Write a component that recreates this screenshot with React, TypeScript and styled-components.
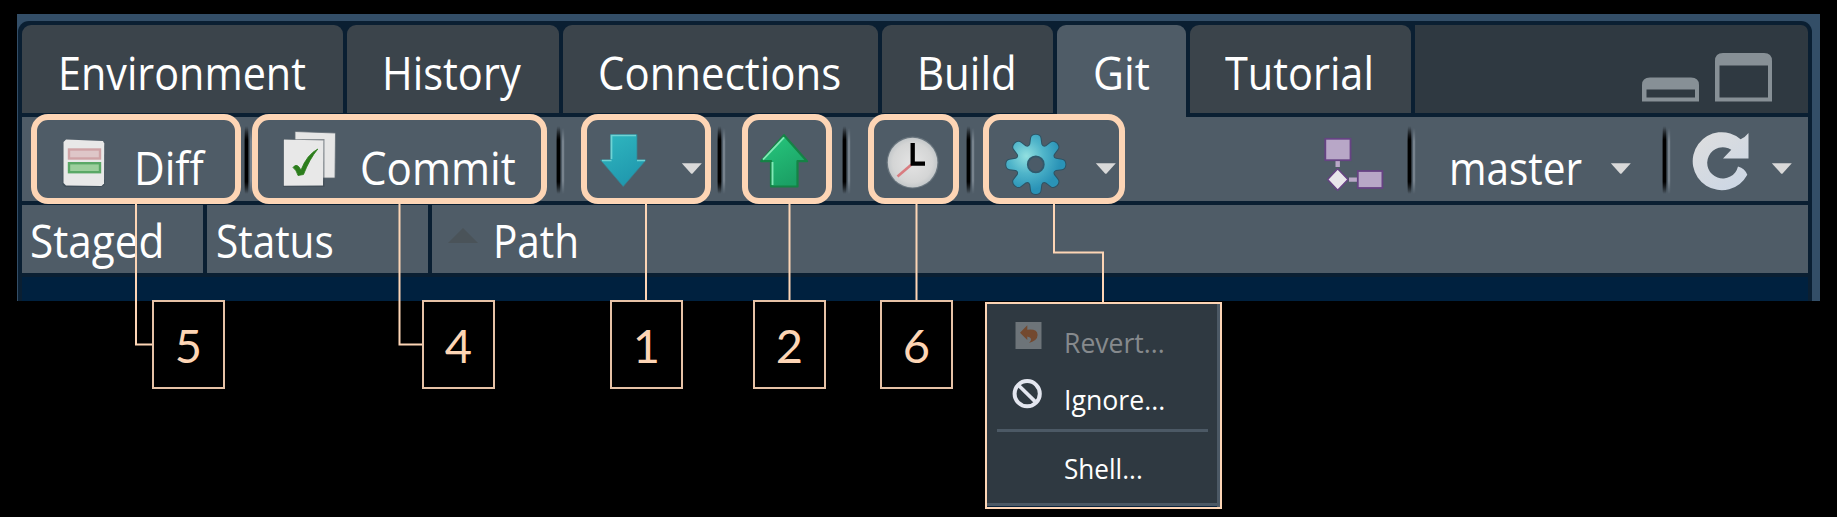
import React from "react";
import styled, { createGlobalStyle } from "styled-components";

const peach = "#fdd5b5";
const line = "#0a1f32";
const slate = "#4f5c67";

const GlobalStyle = createGlobalStyle`
  * { box-sizing: border-box; }
  html, body { margin: 0; padding: 0; background: #000; overflow: hidden; }
`;

const Stage = styled.main`
  position: relative;
  width: 1837px;
  height: 517px;
  padding: 14px 17px 0;
  background: #000;
  overflow: hidden;
  font-family: "Open Sans", "Noto Sans", sans-serif;
  color: #fff;
`;

const Frame = styled.section`
  width: 1803px;
  height: 287px;
  padding: 7px 8.5px 0 1px;
  background: #334e67;
  overflow: hidden;
`;

const Pane = styled.div`
  height: 280px;
  padding: 3.5px 3.5px 0 4px;
  background: ${line};
  border-radius: 11px 11px 0 0;
`;

const TabStrip = styled.nav`
  display: flex;
  gap: 4px;
  height: 88.5px;
  margin-bottom: 4px;
`;

const Tab = styled.div<{ $w: number; $active?: boolean }>`
  flex: none;
  width: ${(p) => p.$w}px;
  height: ${(p) => (p.$active ? 93 : 88.5)}px;
  padding-left: 35.5px;
  line-height: 95px;
  background: ${(p) => (p.$active ? slate : "#3b444b")};
  border-radius: 9px 9px 0 0;
`;

const StripEnd = styled.div`
  flex: 1;
  display: flex;
  justify-content: flex-end;
  align-items: flex-start;
  padding: 28px 36px 0 0;
  gap: 16px;
  background: #2f3941;
  border-radius: 0 7px 0 0;
`;

const Label = styled.span<{ $k: number; $w?: number; $l?: number; $lh?: number }>`
  flex: none;
  display: inline-block;
  vertical-align: top;
  width: ${(p) => (p.$w ? `${p.$w}px` : "auto")};
  margin-left: ${(p) => p.$l ?? 0}px;
  line-height: ${(p) => (p.$lh ? `${p.$lh}px` : "inherit")};
  font-size: 45px;
  white-space: nowrap;
  font-variant-ligatures: none;
  transform: scaleX(${(p) => p.$k});
  transform-origin: 0 50%;
`;

const Toolbar = styled.div`
  display: flex;
  align-items: flex-start;
  height: 84px;
  margin-bottom: 4px;
  background: ${slate};
`;

const Icon = styled.svg<{ $l?: number; $t?: number }>`
  flex: none;
  display: block;
  margin-left: ${(p) => p.$l ?? 0}px;
  margin-top: ${(p) => p.$t ?? 0}px;
`;

const Headings = styled.div`
  display: flex;
  gap: 4px;
  height: 67.5px;
  margin-bottom: 4px;
`;

const Heading = styled.div<{ $w?: number; $pad: number }>`
  display: flex;
  flex: ${(p) => (p.$w ? "none" : 1)};
  width: ${(p) => (p.$w ? `${p.$w}px` : "auto")};
  padding-left: ${(p) => p.$pad}px;
  line-height: 71px;
  background: ${slate};
`;

const FileList = styled.div`
  height: 25px;
  background: #00213f;
`;

const Highlight = styled.div<{ $x: number; $w: number }>`
  position: absolute;
  left: ${(p) => p.$x}px;
  top: 114px;
  width: ${(p) => p.$w}px;
  height: 90px;
  border: 6px solid ${peach};
  border-radius: 17px;
`;

const Connectors = styled.svg`
  position: absolute;
  left: 0;
  top: 0;
  pointer-events: none;
`;

const Callout = styled.div<{ $x: number }>`
  position: absolute;
  left: ${(p) => p.$x}px;
  top: 300px;
  width: 73px;
  height: 89px;
  border: 2px solid #e6c2a6;
  color: ${peach};
  font: 47px/86px Lato, sans-serif;
  text-align: center;
`;

const Menu = styled.div`
  position: absolute;
  left: 985px;
  top: 302px;
  width: 237px;
  height: 207px;
  border: 2px solid ${peach};
  background: #2f3941;
  box-shadow: inset -3px 0 #4c5965, inset 0 -1px #06213c, inset 0 -4px #4c5965;
`;

const MenuItem = styled.div<{ $h: number; $lh: number; $dim?: boolean }>`
  display: flex;
  height: ${(p) => p.$h}px;
  line-height: ${(p) => p.$lh}px;
  color: ${(p) => (p.$dim ? "#868a8d" : "#fff")};
`;

const IconCell = styled.div<{ $t?: number }>`
  flex: none;
  width: 76.5px;
  padding: ${(p) => p.$t ?? 0}px 0 0 25px;
`;

const MenuLabel = styled.span<{ $k: number }>`
  font-size: 27.5px;
  white-space: nowrap;
  transform: scaleX(${(p) => p.$k});
  transform-origin: 0 50%;
`;

const Rule = styled.div`
  height: 3px;
  margin: 0 12px 0 10px;
  background: #4c5965;
`;

const Separator = ({ l }: { l: number }) => (
  <Icon $l={l} $t={7} width="10" height="72" viewBox="0 0 10 72">
    <defs>
      <linearGradient id={`sd${l}`} x1="0" y1="0" x2="0" y2="1">
        <stop offset="0" stopColor="#000" stopOpacity="0" />
        <stop offset="0.2" stopColor="#000" />
        <stop offset="0.82" stopColor="#000" />
        <stop offset="1" stopColor="#000" stopOpacity="0" />
      </linearGradient>
      <linearGradient id={`sl${l}`} x1="0" y1="0" x2="0" y2="1">
        <stop offset="0" stopColor="#98a2ac" stopOpacity="0" />
        <stop offset="0.2" stopColor="#98a2ac" stopOpacity="0.55" />
        <stop offset="0.8" stopColor="#98a2ac" stopOpacity="0.55" />
        <stop offset="1" stopColor="#98a2ac" stopOpacity="0" />
      </linearGradient>
    </defs>
    <rect x="0" y="4" width="5" height="65" fill={`url(#sd${l})`} opacity="0.35" />
    <rect x="0.9" y="2" width="3.2" height="68" fill={`url(#sd${l})`} />
    <rect x="6" y="4" width="2.2" height="66" fill={`url(#sl${l})`} />
  </Icon>
);

const Caret = ({ l }: { l: number }) => (
  <Icon $l={l} $t={46} width="22" height="12" viewBox="0 0 22 12">
    <path d="M0.8 0.3H20.8L11.8 10.2Q10.8 11.2 9.8 10.2Z" fill="#d9d9d9" />
  </Icon>
);

const DiffIcon = () => (
  <Icon $l={40} $t={21} width="44" height="50" viewBox="0 0 44 50">
    <path d="M3 1.8 41 3 43 6 42.5 47 39 49 3 49 .5 46.5 1 5Z" fill="#26333f" opacity=".35" />
    <path d="M4 1.5 41 3 42.3 5.5 42 45.5 39.5 48 4 47.5 1.5 45 1.5 4Z" fill="#e8e8e8" />
    <rect x="7" y="11.5" width="31" height="9" fill="#dec6c8" stroke="#cfa3a6" strokeWidth="2.4" />
    <rect x="7" y="25.2" width="31" height="9" fill="#9ccf9c" stroke="#5aa866" strokeWidth="2.4" />
  </Icon>
);

const CommitIcon = () => (
  <Icon $l={29} $t={13} width="54" height="60" viewBox="0 0 54 60">
    <path d="M12 1.5 52.5 3 52 48 12 48Z" fill="#e6e6e6" stroke="#5f6972" strokeWidth=".8" />
    <path d="M0 9H41.5V57H0Z" fill="#3c4750" opacity=".55" />
    <path d="M.8 9.5 40.3 10.5 40 55.5 .8 55.8Z" fill="#e8e8e8" />
    <path d="M10 37.5Q13 33.5 16 37L18 40Q24 24.5 34.8 19Q26.5 29 20.5 44.5L15 45.5Q13.5 40 10 37.5Z" fill="#2c7d1c" stroke="#2c7d1c" strokeWidth=".8" />
  </Icon>
);

const PullIcon = () => (
  <Icon $l={33} $t={16} width="48" height="56" viewBox="0 0 48 56">
    <defs>
      <linearGradient id="pull" x1="0" y1="0" x2=".5" y2="1">
        <stop offset="0" stopColor="#30b8c0" />
        <stop offset="1" stopColor="#2098ae" />
      </linearGradient>
    </defs>
    <path d="M11.5 1.5H38V27H47L24.2 53.5 1.5 27H11.5Z" fill="url(#pull)" stroke="#37808f" strokeWidth=".8" />
    <path d="M12.5 26V2.5H37M3 27.5H12.5M38 27.5H46" fill="none" stroke="#6fd3d4" strokeWidth="1.7" />
  </Icon>
);

const PushIcon = () => (
  <Icon $l={32} $t={16} width="50" height="57" viewBox="0 0 50 57">
    <defs>
      <linearGradient id="push" x1="0" y1="0" x2=".5" y2="1">
        <stop offset="0" stopColor="#27c97e" />
        <stop offset="1" stopColor="#1ba065" />
      </linearGradient>
    </defs>
    <path d="M25 2.2 48 28.2H38.5V53.5H12V28.2H2.2Z" fill="url(#push)" stroke="#158245" strokeWidth="2.2" strokeLinejoin="round" />
    <path d="M4 26.7 25 4.4M13.5 29V52" fill="none" stroke="#80e9b6" strokeWidth="1.9" />
  </Icon>
);

const ClockIcon = () => (
  <Icon $l={34.5} $t={18} width="54" height="54" viewBox="0 0 54 54">
    <defs>
      <radialGradient id="clock">
        <stop offset="0" stopColor="#e4e4e4" />
        <stop offset=".8" stopColor="#d4d5d5" />
        <stop offset="1" stopColor="#c4c8ca" />
      </radialGradient>
    </defs>
    <circle cx="26.6" cy="27.6" r="26" fill="#808a92" opacity=".55" />
    <circle cx="26.6" cy="27.6" r="24.8" fill="url(#clock)" />
    <path d="M25.5 29.5 11.5 41.5" stroke="#d97c80" strokeWidth="2.6" />
    <path d="M26.7 8V28.6H39" fill="none" stroke="#000" strokeWidth="4.3" />
  </Icon>
);

const gearPoint = (r: number, a: number) =>
  `${(32 + r * Math.sin(a)).toFixed(2)} ${(32 - r * Math.cos(a)).toFixed(2)}`;

const gearOutline =
  Array.from({ length: 8 }, (_, i) => {
    const a = (i * Math.PI) / 4;
    const p = (r: number, d: number) => gearPoint(r, a + d);
    return [
      `${i ? "L" : "M"}${p(20.8, -0.27)}`,
      `L${p(26.5, -0.18)}`,
      `Q${p(29.6, -0.15)} ${p(29.6, 0)}`,
      `Q${p(29.6, 0.15)} ${p(26.5, 0.18)}`,
      `L${p(20.8, 0.27)}`,
      `Q${p(18, Math.PI / 8)} ${p(20.8, Math.PI / 4 - 0.27)}`,
    ].join("");
  }).join("") + "Z";

const GearIcon = () => (
  <Icon $l={29} $t={15} width="64" height="66" viewBox="0 0 64 66">
    <defs>
      <radialGradient id="gear" cx=".34" cy=".36" r=".58">
        <stop offset="0" stopColor="#92e0e0" />
        <stop offset=".5" stopColor="#50b5ca" />
        <stop offset="1" stopColor="#2a93b7" />
      </radialGradient>
    </defs>
    <g transform="translate(-1.2 .4)">
      <path d={gearOutline} fill="url(#gear)" stroke="#2c5364" strokeWidth="2" strokeLinejoin="round" paintOrder="stroke" />
      <circle cx="32" cy="32" r="8" fill="#4b5b68" stroke="#31586b" strokeWidth="1.8" />
    </g>
  </Icon>
);

const BranchIcon = () => (
  <Icon $l={206} $t={19} width="62" height="58" viewBox="0 0 62 58">
    <path d="M14.7 25V31M26 43.6H34" stroke="#b9a8c7" strokeWidth="4.4" />
    <rect x="2.3" y="2.8" width="25.2" height="21.4" fill="#b8a7c7" stroke="#664383" strokeWidth="1.8" />
    <rect x="34.8" y="35" width="24.6" height="17" fill="#b8a7c7" stroke="#664383" strokeWidth="1.8" />
    <path d="M14.7 32.8 25 43.6 14.7 54.2 4.6 43.6Z" fill="#e8e6ea" stroke="#664383" strokeWidth="1.5" strokeLinejoin="round" />
  </Icon>
);

const RefreshIcon = () => (
  <Icon $l={20} $t={14} width="58" height="62" viewBox="0 0 58 62">
    <defs>
      <linearGradient id="refresh" x1="0" y1="0" x2=".7" y2="1">
        <stop offset="0" stopColor="#dedede" />
        <stop offset="1" stopColor="#cdd7e4" />
      </linearGradient>
    </defs>
    <path d="M56.5 2V27.5H31L39.3 18.8A15.6 15.6 0 1 0 46 35.5Q53 37.5 55.3 43.8A29 29 0 1 1 48.6 8.2Q53 6.5 56.5 2Z" fill="url(#refresh)" />
  </Icon>
);

const MinimizeIcon = () => (
  <Icon $t={24} width="57" height="25" viewBox="0 0 57 25">
    <path d="M0 24.5V8Q0 .5 8 .5H49Q57 .5 57 8V24.5ZM4.5 12.5V20.5H53V12.5Z" fill="#879096" fillRule="evenodd" />
  </Icon>
);

const MaximizeIcon = () => (
  <Icon width="57" height="49" viewBox="0 0 57 49">
    <path d="M0 48.5V8Q0 0 8 0H49Q57 0 57 8V48.5ZM4.5 12.5V44.5H53V12.5Z" fill="#879096" fillRule="evenodd" />
  </Icon>
);

const RevertIcon = () => (
  <Icon width="32" height="30" viewBox="0 0 32 30">
    <rect x="3.5" y="1" width="26" height="27" fill="#6d7479" />
    <path d="M8 11.8 15.3 4.3V8.7Q25.5 7.5 25.6 14Q25.5 19.5 17 22Q22 17 15.3 15.5V19Z" fill="#73492f" />
  </Icon>
);

const IgnoreIcon = () => (
  <Icon width="32" height="32" viewBox="0 0 32 32">
    <circle cx="15.2" cy="14.7" r="12.6" fill="none" stroke="#e3e6ef" strokeWidth="4" />
    <path d="M6.5 6.2 24 23.4" stroke="#e3e6ef" strokeWidth="3.6" />
  </Icon>
);

const tabs = [
  { name: "Environment", w: 320.5, k: 0.918 },
  { name: "History", w: 212, k: 0.925 },
  { name: "Connections", w: 315, k: 0.932 },
  { name: "Build", w: 171.5, k: 0.932 },
  { name: "Git", w: 128.5, k: 0.945, active: true },
  { name: "Tutorial", w: 221.5, k: 0.921 },
];

const highlights = [
  [31, 210],
  [252, 295],
  [581, 130],
  [742, 90],
  [868, 91],
  [983, 142],
];

const callouts = [
  { n: 5, x: 152 },
  { n: 4, x: 422 },
  { n: 1, x: 610 },
  { n: 2, x: 753 },
  { n: 6, x: 880 },
];

export default function App() {
  return (
    <Stage>
      <GlobalStyle />
      <Frame>
        <Pane>
          <TabStrip>
            {tabs.map((t) => (
              <Tab key={t.name} $w={t.w} $active={t.active}>
                <Label $k={t.k}>{t.name}</Label>
              </Tab>
            ))}
            <StripEnd>
              <MinimizeIcon />
              <MaximizeIcon />
            </StripEnd>
          </TabStrip>
          <Toolbar>
            <DiffIcon />
            <Label $k={0.94} $l={28} $w={79} $lh={102}>Diff</Label>
            <Separator l={31} />
            <CommitIcon />
            <Label $k={0.937} $l={23} $w={159.5} $lh={102}>Commit</Label>
            <Separator l={36.5} />
            <PullIcon />
            <Caret l={34} />
            <Separator l={14} />
            <PushIcon />
            <Separator l={32.5} />
            <ClockIcon />
            <Separator l={26} />
            <GearIcon />
            <Caret l={26} />
            <BranchIcon />
            <Separator l={22} />
            <Label $k={0.9} $l={31.5} $w={139} $lh={102}>master</Label>
            <Caret l={22.5} />
            <Separator l={30} />
            <RefreshIcon />
            <Caret l={21} />
          </Toolbar>
          <Headings>
            <Heading $w={181} $pad={8}>
              <Label $k={0.94}>Staged</Label>
            </Heading>
            <Heading $w={221} $pad={8.5}>
              <Label $k={0.9}>Status</Label>
            </Heading>
            <Heading $pad={16}>
              <Icon $t={23} width="30" height="16" viewBox="0 0 30 16">
                <path d="M0 15 15 0 30 15Z" fill="#4a5359" />
              </Icon>
              <Label $k={0.9} $l={14.5}>Path</Label>
            </Heading>
          </Headings>
          <FileList />
        </Pane>
      </Frame>

      <Connectors width="1837" height="517" fill="none" stroke={peach} strokeWidth="2">
        <path d="M136 204V344.5H153M399.5 204V344.5H423M646 204V301M789.5 204V301M916.5 204V301M1054 204V252.5H1103V303" />
      </Connectors>
      {highlights.map(([x, w]) => (
        <Highlight key={x} $x={x} $w={w} />
      ))}
      {callouts.map((c) => (
        <Callout key={c.n} $x={c.x}>{c.n}</Callout>
      ))}
      <Menu>
        <MenuItem $h={75} $lh={77} $dim>
          <IconCell $t={17}><RevertIcon /></IconCell>
          <MenuLabel $k={0.965}>Revert...</MenuLabel>
        </MenuItem>
        <MenuItem $h={50} $lh={41}>
          <IconCell><IgnoreIcon /></IconCell>
          <MenuLabel $k={0.97}>Ignore...</MenuLabel>
        </MenuItem>
        <Rule />
        <MenuItem $h={70} $lh={73}>
          <IconCell />
          <MenuLabel $k={0.95}>Shell...</MenuLabel>
        </MenuItem>
      </Menu>
    </Stage>
  );
}
